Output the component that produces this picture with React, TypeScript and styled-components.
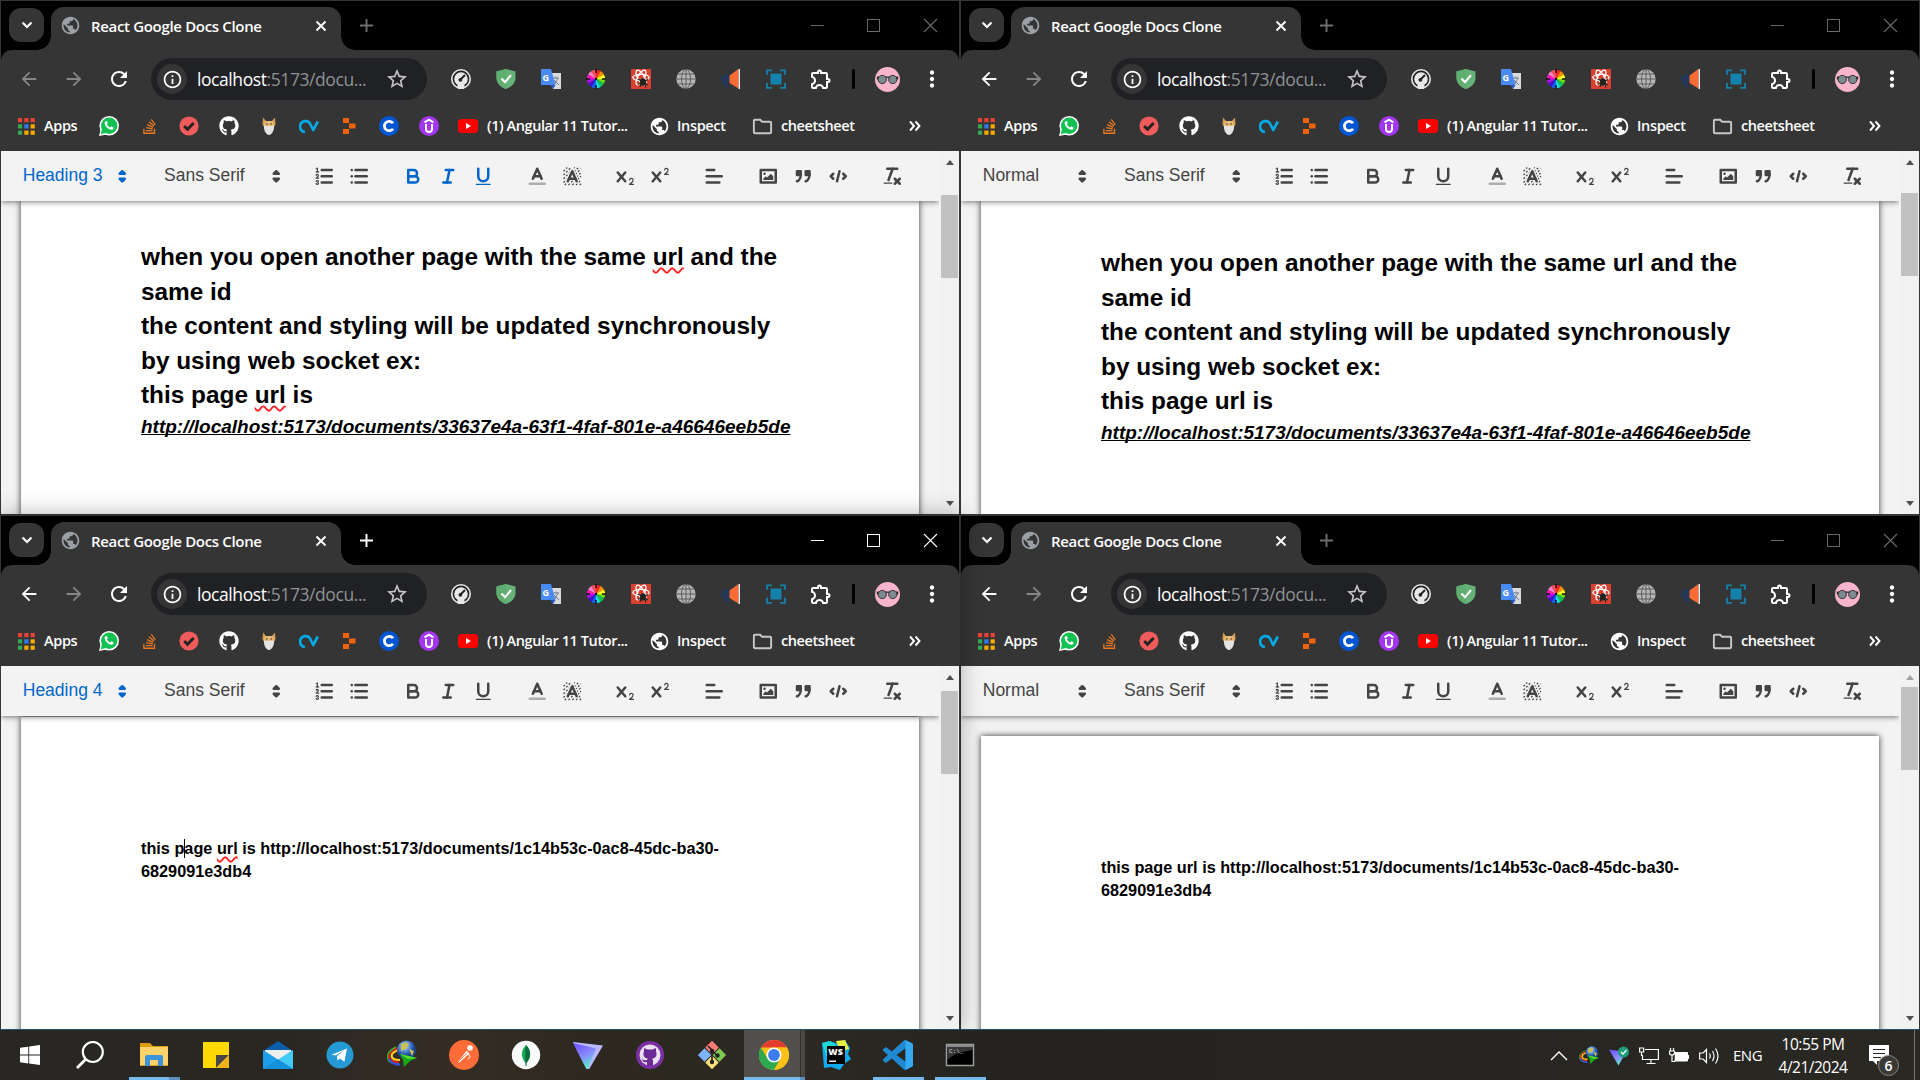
import React from "react";
import styled, { createGlobalStyle, css } from "styled-components";
import { FaGithub, FaStackOverflow } from "react-icons/fa";
import {
  MdArrowBack, MdArrowForward, MdRefresh, MdInfoOutline, MdStarBorder, MdPublic,
  MdOutlineExtension, MdMoreVert, MdOutlineFolder,
} from "react-icons/md";

const UI = `"Open Sans", "Noto Sans", sans-serif`;
const DOC = `"Liberation Sans", Arial, sans-serif`;

const Global = createGlobalStyle`
  * { box-sizing: border-box; }
  body { margin: 0; background: #000; overflow: hidden; }
  svg { display: block; flex: none; }
`;

const Desktop = styled.div`
  width: 1920px;
  height: 1080px;
  display: grid;
  grid-template-columns: 960px 960px;
  grid-template-rows: 515px 515px 50px;
  overflow: hidden;
`;

/* ---------- browser window ---------- */

const Frame = styled.section<{ $active?: boolean; $bottom?: boolean }>`
  position: relative;
  display: flex;
  flex-direction: column;
  border: 1px solid #333536;
  border-bottom-color: ${(p) => (p.$bottom ? "#20506f" : "#333536")};
  background: #000;
  z-index: ${(p) => (p.$active ? 2 : 1)};
  box-shadow: ${(p) => (p.$active ? "0 0 22px rgba(0,0,0,.3)" : "none")};
  min-width: 0;
`;

const TabStrip = styled.div`
  display: flex;
  align-items: flex-start;
  height: 49px;
  padding-left: 8px;
  flex: none;
`;

const TabSearch = styled.div`
  display: flex;
  align-items: center;
  justify-content: center;
  width: 35px;
  height: 34px;
  margin-top: 7px;
  border-radius: 12px;
  background: #353535;
  color: #fff;
`;

const Tab = styled.div`
  position: relative;
  display: flex;
  align-items: center;
  width: 290px;
  height: 43px;
  margin: 6px 0 0 7px;
  padding: 0 10px 6px 9px;
  border-radius: 13px 13px 0 0;
  background: #353535;
  color: #9aa0a6;
  &::before, &::after {
    content: "";
    position: absolute;
    bottom: 0;
    width: 14px;
    height: 14px;
  }
  &::before { left: -14px; background: radial-gradient(circle at 0 0, transparent 13.5px, #353535 14px); }
  &::after { right: -14px; background: radial-gradient(circle at 100% 0, transparent 13.5px, #353535 14px); }
`;

const TabTitle = styled.span`
  flex: 1;
  margin-left: 10px;
  color: #fff;
  font: 600 15px/20px ${UI};
  letter-spacing: -0.33px;
  white-space: nowrap;
`;

const NewTab = styled.div<{ $dim: boolean }>`
  display: flex;
  margin: 14px 0 0 15px;
  color: ${(p) => (p.$dim ? "#6d6d6d" : "#fff")};
`;

const Controls = styled.div<{ $dim: boolean }>`
  display: flex;
  margin: 17px 0 0 auto;
  color: ${(p) => (p.$dim ? "#6a6a6a" : "#fff")};
  & > svg { width: 57px; height: 15px; }
`;

const Chrome = styled.div`
  flex: none;
  height: 101px;
  background: #353535;
  border-radius: 11px 11px 0 0;
`;

const NavRow = styled.div`
  display: flex;
  align-items: center;
  height: 58px;
  padding-left: 5px;
`;

const Cell = styled.div<{ $dim?: boolean; $w?: number; $ml?: number }>`
  display: flex;
  align-items: center;
  justify-content: center;
  flex: none;
  width: ${(p) => p.$w ?? 45}px;
  margin-left: ${(p) => p.$ml ?? 0}px;
  color: ${(p) => (p.$dim ? "#868686" : "#fff")};
`;

const Omnibox = styled.div`
  display: flex;
  align-items: center;
  flex: none;
  width: 276px;
  height: 42px;
  margin: 0 11px 0 10px;
  padding: 0 18px 0 6px;
  border-radius: 21px;
  background: #202124;
  color: #c7c7c7;
`;

const InfoBadge = styled.div`
  display: flex;
  align-items: center;
  justify-content: center;
  width: 30px;
  height: 30px;
  border-radius: 50%;
  background: #353535;
  color: #fff;
`;

const Url = styled.span`
  flex: 1;
  margin-left: 10px;
  color: #8f9296;
  font: 400 17.5px/24px ${UI};
  letter-spacing: -0.42px;
  white-space: nowrap;
  b { font-weight: 400; color: #fff; }
`;

const Divider = styled.i`
  flex: none;
  width: 3px;
  height: 20px;
  margin: 0 20px 0 9px;
  border-radius: 1px;
  background: #000;
`;

const Bookmarks = styled.div`
  display: flex;
  align-items: center;
  height: 36px;
  padding-left: 17px;
  color: #fff;
  font: 600 14.5px/20px ${UI};
  white-space: nowrap;
`;

const Label = styled.span<{ $w: number; $ml?: number; $ls?: number }>`
  flex: none;
  width: ${(p) => p.$w}px;
  margin-left: ${(p) => p.$ml ?? 0}px;
  letter-spacing: ${(p) => p.$ls ?? -0.35}px;
`;

/* ---------- editor ---------- */

const Viewport = styled.div`
  flex: 1;
  min-height: 0;
  display: flex;
  background: #f3f3f3;
`;

const Main = styled.div`
  flex: 1;
  min-width: 0;
  display: flex;
  flex-direction: column;
  overflow: hidden;
`;

const EditorBar = styled.div`
  position: relative;
  z-index: 1;
  display: flex;
  align-items: center;
  flex: none;
  height: 50px;
  padding-left: 10.75px;
  background: #f3f3f3;
  box-shadow: 0 0 6.25px rgba(0, 0, 0, 0.7);
`;

const Group = styled.div`
  display: flex;
  margin-right: 18.75px;
`;

const Picker = styled.div<{ $w: number; $on?: boolean }>`
  display: flex;
  align-items: center;
  justify-content: space-between;
  width: ${(p) => p.$w}px;
  height: 30px;
  padding: 0 0.8px 0 11px;
  color: ${(p) => (p.$on ? "#06c" : "#444")};
  font: 400 17.5px/30px ${DOC};
  span { position: relative; top: -1px; }
`;

const Btn = styled.div<{ $on?: boolean }>`
  display: flex;
  align-items: center;
  justify-content: center;
  width: 35px;
  height: 30px;
  color: ${(p) => (p.$on ? "#06c" : "#444")};
`;

const Paper = styled.article<{ $gap: number; $pad: number }>`
  flex: none;
  height: 1320px;
  margin: ${(p) => p.$gap}px 20px 0;
  padding: ${(p) => p.$pad}px 0 0 120px;
  background: #fff;
  box-shadow: 0 0 6.25px rgba(0, 0, 0, 0.8);
  color: #000;
  font: 700 16.25px/23.1px ${DOC};
  white-space: nowrap;
`;

const H2 = styled.div`
  font-size: 24.375px;
  line-height: 34.6px;
`;
const H3 = styled.div`
  font-size: 19px;
  line-height: 27px;
  font-style: italic;
  text-decoration: underline;
  text-decoration-skip-ink: none;
`;
const H4 = styled.div``;

const Misspelt = styled.span`
  text-decoration: underline wavy #f22 1.5px;
  text-decoration-skip-ink: none;
  text-underline-offset: 2px;
`;

const Caret = styled.i`
  display: inline-block;
  width: 1px;
  height: 19px;
  margin-right: -1px;
  vertical-align: -4px;
  background: #000;
`;

const Scroll = styled.div`
  display: flex;
  flex-direction: column;
  align-items: center;
  width: 20px;
  padding: 9px 0 8px 1px;
  background: #f1f1f1;
`;

const Thumb = styled.div<{ $gap: number }>`
  width: 17px;
  height: 83px;
  margin: ${(p) => p.$gap}px 0 auto;
  background: #c1c1c1;
`;

const Arrow = styled.i<{ $down?: boolean; $off?: boolean }>`
  width: 0;
  height: 0;
  border: 4.5px solid transparent;
  ${(p) =>
    p.$down
      ? css`border-top: 5px solid #505050; border-bottom: 0;`
      : css`border-bottom: 5px solid ${p.$off ? "#a3a3a3" : "#505050"}; border-top: 0;`}
`;

const Q: React.FC<{ children: React.ReactNode }> = ({ children }) => (
  <svg width="22.5" height="22.5" viewBox="0 0 18 18" fill="none" stroke="currentColor" strokeWidth="2" strokeLinecap="round" strokeLinejoin="round">
    {children}
  </svg>
);
const L = ({ p, w, o }: { p: number[]; w?: number; o?: number }) => (
  <line x1={p[0]} y1={p[1]} x2={p[2]} y2={p[3]} strokeWidth={w} opacity={o} />
);
const solid = { fill: "currentColor", stroke: "none" };
const CROSS = "M9.65,5.241a1,1,0,0,0-1.409.108L6,7.964,3.759,5.349A1,1,0,0,0,2.192,6.59178Q2.21541,6.6213,2.241,6.649L4.684,9.5,2.241,12.35A1,1,0,0,0,3.71,13.70722q0.02557-.02768.049-0.05722L6,11.036,8.241,13.65a1,1,0,1,0,1.567-1.24277Q9.78459,12.3777,9.759,12.35L7.316,9.5,9.759,6.651A1,1,0,0,0,9.65,5.241Z";

const Sort = () => (
  <Q>
    <g fill="currentColor"><polygon points="7 11 9 13 11 11 7 11" /><polygon points="7 7 9 5 11 7 7 7" /></g>
  </Q>
);

/* Diagonal dashes behind the highlight-colour letter. */
const hatch: number[][] = [];
for (let k = 7; k <= 31; k += 3) {
  hatch.push(k <= 18 ? [2, k - 2, k - 2, 2] : [k - 16, 16, 16, k - 16]);
}

function EditorToolbar({ block, active }: { block: string; active?: boolean }) {
  return (
    <EditorBar>
      <Group><Picker $w={122.5} $on={block !== "Normal"}><span>{block}</span><Sort /></Picker></Group>
      <Group><Picker $w={135}><span>Sans Serif</span><Sort /></Picker></Group>
      <Group>
        <Btn><Q>
          <L p={[7, 4, 15, 4]} /><L p={[7, 9, 15, 9]} /><L p={[7, 14, 15, 14]} /><L p={[2.5, 5.5, 4.5, 5.5]} w={1} />
          <path {...solid} d="M3.5,6A0.5,0.5,0,0,1,3,5.5V3.085l-0.276.138A0.5,0.5,0,0,1,2.053,3c-0.124-.247-0.023-0.324.224-0.447l1-.5A0.5,0.5,0,0,1,4,2.5v3A0.5,0.5,0,0,1,3.5,6Z" />
          <path strokeWidth="1" d="M4.5,10.5h-2c0-.234,1.85-1.076,1.85-2.234A0.959,0.959,0,0,0,2.5,8.156" />
          <path strokeWidth="1" d="M2.5,14.846a0.959,0.959,0,0,0,1.85-.109A0.7,0.7,0,0,0,3.75,14a0.688,0.688,0,0,0,.6-0.736,0.959,0.959,0,0,0-1.85-.109" />
        </Q></Btn>
        <Btn><Q>{[4, 9, 14].map((y) => <g key={y}><L p={[6, y, 15, y]} /><L p={[3, y, 3, y]} /></g>)}</Q></Btn>
      </Group>
      <Group>
        <Btn $on={active}><Q>
          <path d="M5,4H9.5A2.5,2.5,0,0,1,12,6.5v0A2.5,2.5,0,0,1,9.5,9H5V4Z" />
          <path d="M5,9h5.5A2.5,2.5,0,0,1,13,11.5v0A2.5,2.5,0,0,1,10.5,14H5V9Z" />
        </Q></Btn>
        <Btn $on={active}><Q><L p={[7, 4, 13, 4]} /><L p={[5, 14, 11, 14]} /><L p={[8, 14, 10, 4]} /></Q></Btn>
        <Btn $on={active}><Q>
          <path d="M5,3V9a4.012,4.012,0,0,0,4,4H9a4.012,4.012,0,0,0,4-4V3" />
          <rect {...solid} height="1" rx="0.5" width="12" x="3" y="15" />
        </Q></Btn>
      </Group>
      <Group>
        <Btn><Q><L p={[3, 15, 15, 15]} o={0.4} /><polyline points="5.5 11 9 3 12.5 11" /><L p={[11.63, 9, 6.38, 9]} /></Q></Btn>
        <Btn><Q>
          <g strokeDasharray="1.6 1.4" strokeLinecap="butt">{hatch.map((h, i) => <L key={i} p={h} w={1} />)}</g>
          <polyline points="5.5 13 9 5 12.5 13" stroke="#f3f3f3" strokeWidth="3.6" />
          <polyline points="5.5 13 9 5 12.5 13" /><L p={[11.63, 11, 6.38, 11]} />
        </Q></Btn>
      </Group>
      <Group>
        <Btn><Q><path {...solid} d="M15.5,15H13.861a3.858,3.858,0,0,0,1.914-2.975,1.8,1.8,0,0,0-1.6-1.751A1.921,1.921,0,0,0,12.021,11.7a0.50013,0.50013,0,1,0,.957.291h0a0.914,0.914,0,0,1,1.053-.725,0.81,0.81,0,0,1,.744.762c0,1.076-1.16971,1.86982-1.93971,2.43082A1.45639,1.45639,0,0,0,12,15.5a0.5,0.5,0,0,0,.5.5h3A0.5,0.5,0,0,0,15.5,15Z" /><path {...solid} d={CROSS} /></Q></Btn>
        <Btn><Q><path {...solid} d="M15.5,7H13.861a4.015,4.015,0,0,0,1.914-2.975,1.8,1.8,0,0,0-1.6-1.751A1.922,1.922,0,0,0,12.021,3.7a0.5,0.5,0,1,0,.957.291,0.917,0.917,0,0,1,1.053-.725,0.81,0.81,0,0,1,.744.762c0,1.077-1.164,1.925-1.934,2.486A1.423,1.423,0,0,0,12,7.5a0.5,0.5,0,0,0,.5.5h3A0.5,0.5,0,0,0,15.5,7Z" /><path {...solid} d={CROSS} /></Q></Btn>
      </Group>
      <Group><Btn><Q><L p={[3, 9, 15, 9]} /><L p={[3, 14, 13, 14]} /><L p={[3, 4, 9, 4]} /></Q></Btn></Group>
      <Group>
        <Btn><Q>
          <rect height="10" width="12" x="3" y="4" /><circle {...solid} cx="6" cy="7" r="1" />
          <polyline {...solid} points="5 12 5 11 7 9 8 10 11 7 13 9 13 12 5 12" />
        </Q></Btn>
        <Btn><Q>
          <rect fill="currentColor" height="3" width="3" x="4" y="5" /><rect fill="currentColor" height="3" width="3" x="11" y="5" />
          <path d="M7,8c0,4.031-3,5-3,5" /><path d="M14,8c0,4.031-3,5-3,5" />
        </Q></Btn>
        <Btn><Q><polyline points="5 7 3 9 5 11" /><polyline points="13 7 15 9 13 11" /><L p={[10, 5, 8, 13]} /></Q></Btn>
      </Group>
      <Group>
        <Btn><Q>
          <L p={[5, 3, 13, 3]} /><L p={[6, 12, 9.35, 3]} /><L p={[11, 11, 15, 15]} /><L p={[15, 11, 11, 15]} />
          <rect {...solid} height="1" rx="0.5" width="7" x="2" y="14" />
        </Q></Btn>
      </Group>
    </EditorBar>
  );
}

/* ---------- browser icons ---------- */

const I = ({ s = 20, children }: { s?: number; children: React.ReactNode }) => (
  <svg width={s} height={s} viewBox="0 0 20 20">{children}</svg>
);

const extensions: React.ReactNode[] = [
  <I><circle cx="10" cy="10" r="10" fill="#e8e8e8" /><circle cx="10" cy="10" r="7.6" fill="none" stroke="#222" strokeWidth="1.6" /><circle cx="10" cy="17.5" r="3.6" fill="#e8e8e8" /><path d="M9 11 14 6" stroke="#222" strokeWidth="2" /><circle cx="9.4" cy="10.8" r="1.9" fill="#222" /></I>,
  <I><path d="M10 0 19.5 2.5V9c0 5-4 9-9.5 11C4.5 18 .5 14 .5 9V2.5z" fill="#67b279" /><path d="M10 0v20C4.5 18 .5 14 .5 9V2.5z" fill="#5fae6f" /><path d="m5.5 9.5 3.5 3.7 6-7" fill="none" stroke="#fff" strokeWidth="2" /></I>,
  <I><path d="M8 4h12v16h-8z" fill="#d8dadd" /><path d="M0 0h10l4.5 16H0z" fill="#4a8af4" /><path d="M9.5 16h5L12 20z" fill="#2a56c6" /><text x="1.6" y="11.5" fontFamily="Open Sans" fontWeight="700" fontSize="9" fill="#fff">G</text><path d="M12 9h6M15 7.5V9m-2 7 4-7m-4 2 5 5" stroke="#6b7f93" strokeWidth="1" fill="none" /></I>,
  <I>
    {["#ff2020", "#ff9000", "#ffff20", "#70e010", "#10c050", "#10e0e0", "#1060ff", "#4010d0", "#b010f0", "#ff10c0", "#ff80c0", "#ff5060"].map((c, i) => (
      <path key={c} fill={c} transform={`rotate(${i * 30} 10 10)`} d="M10 10 10 .9A9.1 9.1 0 0 1 14.6 2.1z" />
    ))}
    <path d="M10 0v4M10 16v4M0 10h4M16 10h4" stroke="#111" strokeWidth="1.5" /><circle cx="10" cy="10" r="1.2" fill="#111" />
  </I>,
  <I><rect width="20" height="20" fill="#d9402f" /><g fill="none" stroke="#fff" strokeWidth="1.3"><ellipse cx="10" cy="8.5" rx="8.2" ry="3.2" /><ellipse cx="10" cy="8.5" rx="8.2" ry="3.2" transform="rotate(60 10 8.5)" /><ellipse cx="10" cy="8.5" rx="8.2" ry="3.2" transform="rotate(120 10 8.5)" /></g><ellipse cx="12" cy="13" rx="3" ry="3.8" fill="#222" /><path d="m7 10 10 6M7 15.5 17 10.5M9 18l2-6M15 18.5 13 12" stroke="#222" strokeWidth="1.1" /></I>,
  <I><circle cx="10" cy="10" r="9.7" fill="#b4b4b4" /><g fill="none" stroke="#555" strokeWidth=".9"><ellipse cx="10" cy="10" rx="4.5" ry="9.7" /><path d="M10 0v20M0 10h20M2 5h16M2 15h16" /></g></I>,
  <I><path d="M9 5v9l-2 1 .5 4H4.5L3 14.5Q0 13.5 0 10t3-4z" fill="#253858" /><path d="M8.5 6.5 17.5 0v19.5L8.500 14z" fill="#ff6b35" /><path d="M17.500 0H19v20h-1.500z" fill="#e8e8e8" /></I>,
  <I><path d="M4.5 4.5h11v11h-11z" fill="#1582ae" /><path d="M1 6V1.500h5M14 1.500h5V6M19 14v5h-5M6 19H1v-5" transform="translate(0 -.2)" fill="none" stroke="#1582ae" strokeWidth="1.800" /></I>,
  <MdOutlineExtension size={24} />,
];

const bookmarks: React.ReactNode[] = [
  <I><circle cx="10.2" cy="9.8" r="9.8" fill="#fff" /><path d="M0 20 1.7 13l6 5.5z" fill="#fff" /><circle cx="10.2" cy="9.8" r="8.2" fill="#12c152" /><path d="M1.8 18.2 3 13l4 4z" fill="#12c152" /><path d="M6.2 5.5c1-1 1.7-.6 2 .3l.6 1.5-.9 1.3c.8 1.5 1.8 2.4 3.3 3l1.2-1.3 2 1c.5.4 0 1.900-1.200 2.400-3 .800-8-3.700-7.500-7.200z" fill="#fff" /></I>,
  <FaStackOverflow size={17} color="#e87922" />,
  <I><circle cx="10" cy="10" r="9.6" fill="#f05b5b" /><path d="m5.2 10 3.3 3.3 6.2-6.3" fill="none" stroke="#252525" strokeWidth="3" /></I>,
  <FaGithub size={20} />,
  <I><path d="M4 1.5 7 5h6l3-3.500.500 7-2 3h-9l-2-3z" fill="#d8a04e" /><path d="M5.500 5h9l.500 6h-10z" fill="#e8b878" /><path d="M5 9.500q5 1 10 0c.5 5-2 9-5 9.500-3-.5-5.500-4.500-5-9.500z" fill="#e3e3e3" /><path d="M7 8h1.500M11.500 8H13" stroke="#333" strokeWidth="1" /></I>,
  <I><path d="M6 16C1.500 15.500.300 11.500 1.500 8.500 3 4.800 8.500 3.500 11 7.500l3.200 6.500L18.800 5.500" fill="none" stroke="#03a9e2" strokeWidth="2.700" strokeLinejoin="round" /></I>,
  <I><g fill="#f26207"><path d="M4 2h6v5H4zM10 7.500h6.500v5H10zM4 13h6v5H4z" /></g></I>,
  <I><circle cx="10" cy="10" r="10" fill="#0056d2" /><path d="M14 7.300A4.700 4.700 0 1 0 14 12.700" fill="none" stroke="#fff" strokeWidth="2.800" /></I>,
  <I><circle cx="10" cy="10" r="10" fill="#a435f0" /><path d="M5.500 6.300 10 3.600l4.500 2.700M7 8v5a3 3 0 0 0 6 0V8" fill="none" stroke="#fff" strokeWidth="2" /></I>,
];

type DocProps = { block: string; active?: boolean; focused?: boolean; back?: boolean; bottom?: boolean; thumb: number; gap: number; pad: number; atTop?: boolean; children: React.ReactNode };

function BrowserWindow({ block, active, focused, back = true, bottom, thumb, gap, pad, atTop, children }: DocProps) {
  return (
    <Frame $active={focused} $bottom={bottom}>
      <TabStrip>
        <TabSearch><svg width="12" height="8" viewBox="0 0 12 8"><path d="m1.500 1.500 4.500 4.500 4.500-4.500" fill="none" stroke="currentColor" strokeWidth="2.200" /></svg></TabSearch>
        <Tab>
          <MdPublic size={21} />
          <TabTitle>React Google Docs Clone</TabTitle>
          <svg width="20" height="20" viewBox="0 0 20 20"><path d="m5.500 5.500 9 9m0-9-9 9" stroke="#fff" strokeWidth="1.900" /></svg>
        </Tab>
        <NewTab $dim={!focused}><svg width="21" height="21" viewBox="0 0 21 21"><path d="M10.500 4v13M4 10.500h13" stroke="currentColor" strokeWidth="1.900" /></svg></NewTab>
        <Controls $dim={!focused}>
          <svg viewBox="0 0 57 15"><path d="M23 7.500h13" stroke="currentColor" /></svg>
          <svg viewBox="0 0 57 15"><rect x="22.500" y="1.500" width="12" height="12" fill="none" stroke="currentColor" /></svg>
          <svg viewBox="0 0 57 15"><path d="m22 1 13 13M35 1 22 14" stroke="currentColor" strokeWidth="1.100" /></svg>
        </Controls>
      </TabStrip>
      <Chrome>
        <NavRow>
          <Cell $dim={!back}><MdArrowBack size={22} /></Cell>
          <Cell $dim><MdArrowForward size={22} /></Cell>
          <Cell><MdRefresh size={24} /></Cell>
          <Omnibox>
            <InfoBadge><MdInfoOutline size={21} /></InfoBadge>
            <Url><b>localhost</b>:5173/docu...</Url>
            <MdStarBorder size={24} />
          </Omnibox>
          {extensions.map((e, i) => <Cell key={i}>{e}</Cell>)}
          <Divider />
          <I s={25}><circle cx="10" cy="10" r="10" fill="#f8b4cc" /><path d="M1.500 8h17M2 8v2M18 8v2" stroke="#222" strokeWidth="1" /><circle cx="5.800" cy="10" r="3.300" fill="#7d8a90" stroke="#333" strokeWidth=".8" /><circle cx="14.200" cy="10" r="3.300" fill="#7d8a90" stroke="#333" strokeWidth=".8" /></I>
          <Cell $w={26} $ml={19}><MdMoreVert size={26} /></Cell>
        </NavRow>
        <Bookmarks>
          <svg width="17" height="17" viewBox="0 0 17 17">
            {["#ea4335", "#ea4335", "#ea4335", "#34a853", "#2b7de9", "#f9ab00", "#34a853", "#f9ab00", "#f9ab00"].map((c, i) => (
              <rect key={i} x={(i % 3) * 6.3} y={Math.floor(i / 3) * 6.3} width="4.200" height="4.200" fill={c} />
            ))}
          </svg>
          <Label $w={45} $ml={9}>Apps</Label>
          {bookmarks.map((b, i) => <Cell key={i} $w={40}>{b}</Cell>)}
          <Cell $w={38}><svg width="20" height="14" viewBox="0 0 20 14"><rect width="20" height="14" rx="3.500" fill="#f00" /><path d="m8 4 5 3-5 3z" fill="#fff" /></svg></Cell>
          <Label $w={162} $ls={-0.42}>(1) Angular 11 Tutor...</Label>
          <MdPublic size={21} />
          <Label $w={74} $ml={7}>Inspect</Label>
          <MdOutlineFolder size={23} color="#c7c7c7" />
          <Label $w={127} $ml={7} $ls={-0.4}>cheetsheet</Label>
          <svg width="14" height="12" viewBox="0 0 14 12"><path d="m2 1.500 4 4.500-4 4.500M7.500 1.500l4 4.500-4 4.500" fill="none" stroke="#fff" strokeWidth="1.900" /></svg>
        </Bookmarks>
      </Chrome>
      <Viewport>
        <Main>
          <EditorToolbar block={block} active={active} />
          <Paper $gap={gap} $pad={pad}>{children}</Paper>
        </Main>
        <Scroll><Arrow $off={atTop} /><Thumb $gap={thumb} /><Arrow $down /></Scroll>
      </Viewport>
    </Frame>
  );
}

const Instructions = ({ spell }: { spell?: boolean }) => {
  const Word = spell ? Misspelt : "span";
  return (
    <>
      <H2>when you open another page with the same <Word>url</Word> and the</H2>
      <H2>same id</H2>
      <H2>the content and styling will be updated synchronously</H2>
      <H2>by using web socket ex:</H2>
      <H2>this page <Word>url</Word> is</H2>
      <H3>http://localhost:5173/documents/33637e4a-63f1-4faf-801e-a46646eeb5de</H3>
    </>
  );
};

/* ---------- taskbar ---------- */

const Taskbar = styled.footer`
  grid-column: 1 / -1;
  position: relative;
  z-index: 3;
  display: flex;
  background: linear-gradient(90deg, #282723 0, #2a2722 15%, #352d24 23%, #2d2921 30%, #2c2922 42%, #24231f 52%, #2a2823 100%);
`;

const Task = styled.div<{ $w?: number; $mr?: number; $on?: boolean }>`
  display: flex;
  position: relative;
  align-items: center;
  justify-content: center;
  width: ${(p) => p.$w ?? 62}px;
  height: 50px;
  margin-right: ${(p) => p.$mr ?? 0}px;
  background: ${(p) => (p.$on ? "linear-gradient(90deg,transparent 1px,#52504d 1px 57px,#33312e 57px 58px,#4a4845 58px)" : "none")};
`;

const Run = styled.i<{ $x: number; $w: number; $more?: number }>`
  position: absolute;
  left: ${(p) => p.$x}px;
  bottom: 0;
  width: ${(p) => p.$w}px;
  height: 3px;
  background: ${(p) => `linear-gradient(90deg, #76b9ed calc(100% - ${p.$more ?? 0}px), #5a8fbf 0)`};
`;

const Tray = styled.div`
  display: flex;
  align-items: center;
  margin-left: auto;
  color: #fff;
  font: 400 16px/23px ${UI};
  padding-top: 1px;
`;

const Lang = styled.span`
  width: 40px;
  margin-left: 9px;
  font-size: 15px;
  letter-spacing: -0.5px;
`;

const Clock = styled.div`
  width: 80px;
  text-align: center;
  font-size: 15.5px;
  letter-spacing: -0.5px;
  white-space: nowrap;
`;

const Notice = styled.div`
  position: relative;
  width: 62px;
  padding-left: 16px;
  border-right: 1px solid #77756f;
  height: 50px;
  margin: -1px 5px 0 0;
  padding-top: 15px;
`;

const Count = styled.b`
  position: absolute;
  left: 25px;
  top: 25px;
  width: 21px;
  height: 21px;
  border: 1px solid #8a8884;
  border-radius: 50%;
  background: #3a3936;
  font: 600 14px/19px ${UI};
  text-align: center;
`;

const S = ({ s = 30, children }: { s?: number; children: React.ReactNode }) => (
  <svg width={s} height={s} viewBox="0 0 30 30">{children}</svg>
);

const Downloader = ({ s }: { s: number }) => (
  <S s={s}>
    <defs><radialGradient id="earth" cx=".4" cy=".3"><stop offset="0" stopColor="#e8f0ff" /><stop offset=".5" stopColor="#5f90dc" /><stop offset="1" stopColor="#1a4490" /></radialGradient></defs>
    <g fill="none" strokeWidth="2.200"><path d="M11 8C-1 12-2 22 12 22" stroke="#e02010" /><path d="M12 10C2 13 2 20 13 20" stroke="#ffd020" /><path d="M9 7C-3 13-3 24 12 24" stroke="#30b030" strokeWidth="1.400" /><path d="M2 19q3 6 11 5.500" stroke="#3050e0" /></g>
    <circle cx="19.500" cy="10" r="9.500" fill="url(#earth)" /><path d="M14 4q5-3 8 0l-3 5-5 2zM22 9l5 2-2 5z" fill="#c8c050" /><path d="m13 14 17 4-7 3-6 6-1-7z" fill="#18a818" /><path d="m13 14 17 4-9 1z" fill="#50e030" />
  </S>
);

const taskIcons: React.ReactNode[] = [
  <S><path d="M1 3h10l3 3h15v20H1z" fill="#dd9b10" /><path d="M1 7h28v18H1z" fill="#ffd36b" /><path d="M6 25V17q0-2 2-2h14q2 0 2 2v9h-5v-6h-8v6H6z" fill="#3c94dc" /></S>,
  <S><path d="M2 2h26v26H2z" fill="#ffd800" /><path d="M15 28V15h13L15 28z" fill="#474747" /><path d="M15 28 28 15v13z" fill="#f2b21a" /></S>,
  <S><path d="M0 11 15 1l15 10v4H0z" fill="#0a5ea8" /><path d="M2 10h26v10H2z" fill="#eee" /><path d="M0 10v19h30z" fill="#1a9fe8" /><path d="M30 10v19L15 19.500z" fill="#43cbf7" /><path d="M0 29 15 19.500 30 29z" fill="#1590dc" /></S>,
  <S><circle cx="15" cy="15" r="13.500" fill="#2499d4" /><path d="M6.500 14.700 22 8.500l-2.600 13.200-4.500-3.300-2.300 2.300-.7-4.500 7-6-8.300 5.200z" fill="#fff" /></S>,
  <Downloader s={30} />,
  <S><circle cx="15" cy="15" r="15" fill="#ff6c37" /><circle cx="21" cy="8" r="2.800" fill="#fff" /><path d="m8 23 9.500-12 3 2.500L11 22z" fill="#fff" /><path d="m8 23 10-10" stroke="#ff6c37" strokeWidth=".8" /><path d="m19 13 2 3.500-2 3" stroke="#fff" strokeWidth="1" fill="none" /></S>,
  <S><circle cx="15" cy="15" r="14.200" fill="#fafafa" /><path d="M15 5c5 5 6 12 0 18.500C9 17 10 10 15 5z" fill="#13aa52" /><path d="M15 5c5 5 6 12 0 18.500z" fill="#0b6f3c" /><path d="M15 8v18" stroke="#0b5f3c" strokeWidth="1" /></S>,
  <S><defs><linearGradient id="vpn" x1="0" y1="0" x2=".5" y2="1"><stop stopColor="#6a4bff" /><stop offset=".6" stopColor="#8a8cff" /><stop offset="1" stopColor="#54ebc5" /></linearGradient></defs><path d="M0 2 30 5.500 16.500 28.500q-1.500 1-3 0z" fill="#bcb8ff" /><path d="M0 3 23 8.500 14.500 29q-1 0-2-1.500z" fill="url(#vpn)" /></S>,
  <S><circle cx="15" cy="15" r="14" fill="#7b2fa3" /><circle cx="15" cy="15" r="10.500" fill="#e8e0f0" /><path d="M12 26v-4q-4 1-5-3 3 2 5 1l.8-1.500C8 18 8 14 9 11.500L9 8l3.500 1.500h5L21 8v3.500c1 2.500 1 6.500-3.800 7l.8 2V26z" fill="#6b2a96" /></S>,
  <S><g transform="rotate(45 15 15)"><path d="M5 5h9.500v9.500H5z" fill="#ff7b7b" /><path d="M15.500 5H25v9.500h-9.500z" fill="#7fc94f" /><path d="M5 15.500h9.500V25H5z" fill="#80b3ff" /><path d="M15.500 15.500H25V25h-9.500z" fill="#ffe07a" /></g><path d="M11 6 15 10v13M15 11l6 5" stroke="#222" strokeWidth="1.600" fill="none" /><circle cx="15" cy="11" r="2.200" fill="#222" /><circle cx="20.500" cy="15.500" r="2.200" fill="#222" /><circle cx="15" cy="22" r="2.200" fill="#222" /></S>,
  <S><circle cx="15" cy="15" r="15" fill="#fbc116" /><path d="M2 7.500A15 15 0 0 1 28 7.500H15z" fill="#e33b2e" /><path d="M2 7.500A15 15 0 0 0 15 30L21.500 18.700 15 15 8.500 18.700z" fill="#2da94f" /><path d="M28 7.500A15 15 0 0 1 15 30L21.500 18.700A7.500 7.500 0 0 0 15 7.500z" fill="#fbc116" /><circle cx="15" cy="15" r="7.500" fill="#fff" /><circle cx="15" cy="15" r="5.900" fill="#3b7ded" /></S>,
  <S><path d="m1 3 8-2 6 2 9-3 5 8-2 6 3 5-7 5-4 6-9-3-7 1z" fill="#12a9f0" /><path d="m15 1 9-1 4 9-9 2z" fill="#e9ef3f" /><path d="m1 3 8-2 6 4-9 13z" fill="#20d6d0" /><path d="M6 6h18v18H6z" fill="#000" /><text x="7.300" y="15.200" fontFamily="Open Sans" fontWeight="800" fontSize="9" fill="#fff">WS</text><path d="M8 20.500h7v1.400H8z" fill="#fff" /></S>,
  <svg width="30" height="30" viewBox="0 0 24 24"><path fill="#1f8ad2" d="M23.150 2.587L18.210.210a1.494 1.494 0 0 0-1.705.290l-9.460 8.630-4.120-3.128a.999.999 0 0 0-1.276.057L.327 7.261A1 1 0 0 0 .326 8.740L3.899 12 .326 15.260a1 1 0 0 0 .001 1.479L1.650 17.940a.999.999 0 0 0 1.276.057l4.120-3.128 9.460 8.630a1.492 1.492 0 0 0 1.704.290l4.942-2.377A1.500 1.500 0 0 0 24 20.060V3.939a1.500 1.500 0 0 0-.850-1.352zm-5.146 14.861L10.826 12l7.178-5.448v10.896z" /><path fill="#35a9f2" d="M18 .100 23.150 2.587A1.500 1.500 0 0 1 24 3.940v16.120a1.500 1.500 0 0 1-.85 1.350L18 23.900z" /></svg>,
  <S><path d="M1.500 4.500h27v21h-27z" fill="#000" stroke="#9b9b9b" strokeWidth="1.500" /><path d="M2 5h26v5Q10 12 2 20z" fill="#363636" /><path d="M2 6h26" stroke="#ddd" /><text x="4" y="13" fontFamily="Liberation Mono" fontSize="6" fill="#ddd">C:\_</text></S>,
];

function Bar() {
  return (
    <Taskbar>
      <Task $w={60}><svg width="20" height="20" viewBox="0 0 20 20" fill="#fff"><path d="M0 2.800 8.300 1.700v7.900H0zM9.200 1.500 20 0v9.600H9.200zM0 10.500h8.300v7.900L0 17.200zM9.200 10.500H20V20L9.200 18.500z" /></svg></Task>
      <Task $w={60} $mr={3}><svg width="28" height="28" viewBox="0 0 28 28"><circle cx="16.800" cy="11" r="10" fill="none" stroke="#fff" strokeWidth="2.200" /><path d="M9.500 18.500 1 27" stroke="#fff" strokeWidth="2.800" /></svg></Task>
      {taskIcons.map((icon, i) => (
        <Task key={i} $on={i === 10}>
          {icon}
          {i === 0 && <Run $x={6} $w={51} $more={11} />}
          {i === 10 && <Run $x={1} $w={61} $more={5} />}
          {i >= 12 && <Run $x={6} $w={51} />}
        </Task>
      ))}
      <Tray>
        <Cell $w={30}><svg width="18" height="10" viewBox="0 0 18 10"><path d="m1 9 8-8 8 8" fill="none" stroke="#fff" strokeWidth="1.400" /></svg></Cell>
        <Cell $w={30}><Downloader s={20} /></Cell>
        <Cell $w={30}><svg width="20" height="20" viewBox="0 0 20 20"><path d="M0 3.500 17 6 9.500 19.500z" fill="url(#vpn)" /><circle cx="14.500" cy="6" r="5.500" fill="#1f9c7c" /><path d="m12 6 2 2 3.500-4" fill="none" stroke="#fff" strokeWidth="1.200" /></svg></Cell>
        <Cell $w={30}><svg width="20" height="18" viewBox="0 0 20 18" fill="none" stroke="#fff" strokeWidth="1.200"><path d="M6 2.500h13.400v10H3.500V8M12 12.500v4M7.500 16.500h9M.600 1h4v4h-4zM2.500 5v4" /></svg></Cell>
        <Cell $w={30}><svg width="20" height="16" viewBox="0 0 20 16"><path d="M6 4.500h12.500v8.500h-13" fill="#fff" stroke="#fff" strokeWidth="1" /><path d="M19 7h1v4h-1z" fill="#fff" /><path d="M1.500 0v3M4.500 0v3M.500 3h5v2q0 2-2.500 2T.500 5zM3 7v6.500h3" fill="none" stroke="#fff" strokeWidth="1.200" /></svg></Cell>
        <Cell $w={30}><svg width="21" height="18" viewBox="0 0 21 18" fill="none" stroke="#fff" strokeWidth="1.200"><path d="M.600 6h3.500L7.500 2.500v13L4.100 12H.600zM10.500 6.500q1.500 2.500 0 5M13.500 4q3 5 0 10M16.500 1.500q5 7.500 0 15" /></svg></Cell>
        <Lang>ENG</Lang>
        <Clock>10:55 PM<br />4/21/2024</Clock>
        <Notice>
          <svg width="20" height="20" viewBox="0 0 20 20"><path d="M0 0h20v16H8v4l-4-4H0z" fill="#fff" /><path d="M4 4.500h12M4 8.500h12M4 12.500h8" stroke="#2a2823" strokeWidth="1.200" /></svg>
          <Count>6</Count>
        </Notice>
      </Tray>
    </Taskbar>
  );
}

export default function App() {
  return (
    <>
      <Global />
      <Desktop>
        <BrowserWindow block="Heading 3" active back={false} thumb={30} gap={0} pad={39}><Instructions spell /></BrowserWindow>
        <BrowserWindow block="Normal" thumb={28} gap={0} pad={45}><Instructions /></BrowserWindow>
        <BrowserWindow block="Heading 4" focused bottom thumb={11} gap={1} pad={120}>
          <H4>this p<Caret />age <Misspelt>url</Misspelt> is http://localhost:5173/documents/1c14b53c-0ac8-45dc-ba30-</H4>
          <H4>6829091e3db4</H4>
        </BrowserWindow>
        <BrowserWindow block="Normal" bottom atTop thumb={7} gap={20} pad={120}>
          <H4>this page url is http://localhost:5173/documents/1c14b53c-0ac8-45dc-ba30-</H4>
          <H4>6829091e3db4</H4>
        </BrowserWindow>
        <Bar />
      </Desktop>
    </>
  );
}
